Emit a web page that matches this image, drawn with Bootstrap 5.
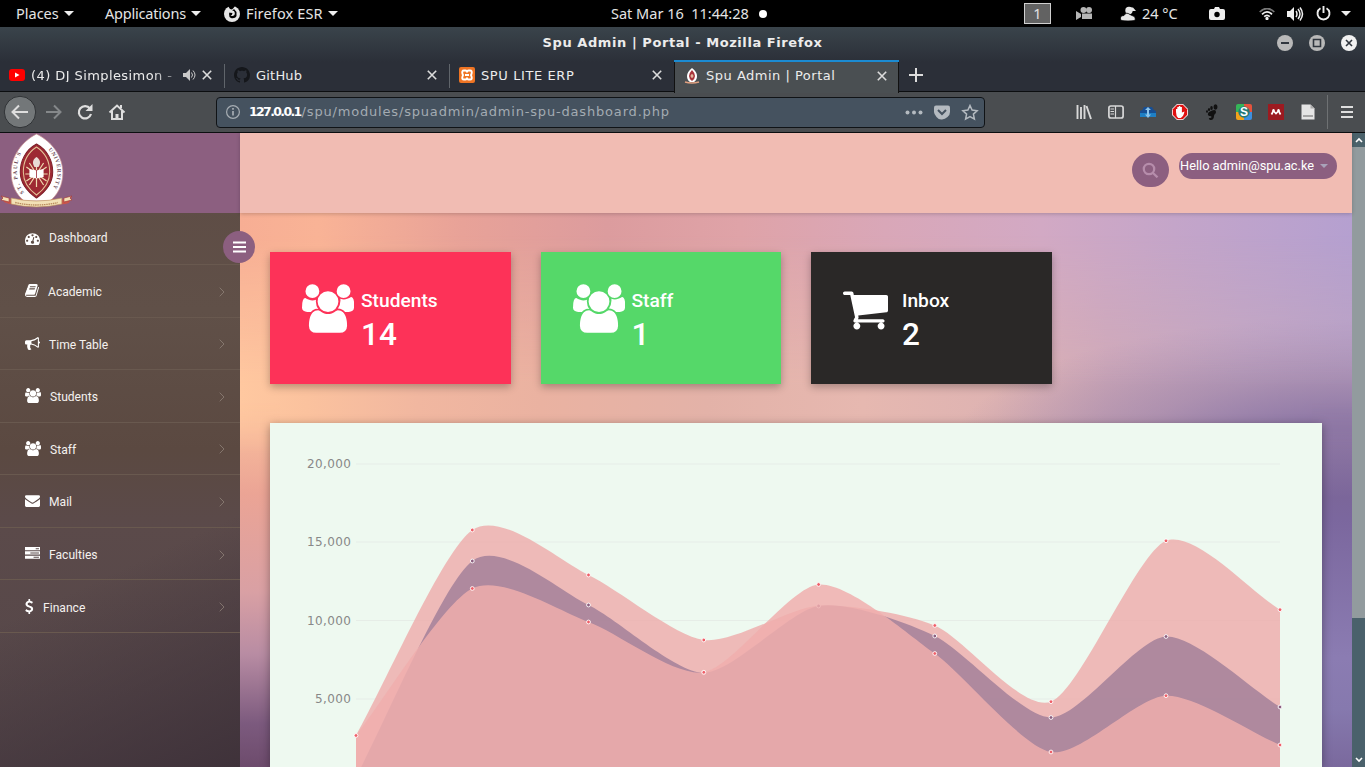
<!DOCTYPE html>
<html lang="en">
<head>
<meta charset="utf-8">
<title>Spu Admin | Portal</title>
<meta name="viewport" content="width=device-width, initial-scale=1">
<link href="https://cdn.jsdelivr.net/npm/bootstrap@5.3.0/dist/css/bootstrap.min.css" rel="stylesheet">
<style>
  :root { --plum: #8c5f80; --steel: #4a616b; }
  html, body { height: 767px; overflow: hidden; }
  body { font-family: Roboto, sans-serif; background: #000; line-height: 1; }
  svg { display: block; flex: none; }

  /* desktop panel */
  .panel { height: 27px; background: #000; color: #e4e4e4; font: 14.5px/27px "Noto Sans", sans-serif; white-space: pre; }
  .panel .lbl { display: inline-block; }
  .tri { display: inline-block; border: 5px solid transparent; border-top-color: #eee; border-bottom: 0; }
  .workspace { width: 27px; height: 21px; background: #626262; border: 1px solid #d0d0d0; line-height: 19px; }

  /* window frame */
  .frame { height: 65px; background: linear-gradient(#3a444b, #2b2f38 55%, #2b2f38); border-bottom: 1px solid #0c0e10; font-family: "DejaVu Sans", sans-serif; color: #ececec; }
  .titlebar { height: 33px; }
  .titlebar .wtitle { font-size: 13px; font-weight: 700; line-height: 31px; letter-spacing: .57px; }
  .tabs { height: 32px; font-size: 13px; letter-spacing: .5px; }
  .btab { width: 225px; height: 32px; padding: 0 12px 2px 10px; }
  .btab:first-child { width: 224px; padding-left: 9px; }
  .btab + .btab { background: linear-gradient(#60656b, #60656b) 0 4px / 1px 24px no-repeat; }
  .btab + .btab.on { background: #4a4f52; border-top: 2px solid #1b8bd2; box-shadow: inset 1px 0 #111, inset -1px 0 #111; height: 33px; padding-bottom: 4px; }
  .fade-title { width: 147px; -webkit-mask-image: linear-gradient(90deg, #000 82%, rgba(0,0,0,.3)); mask-image: linear-gradient(90deg, #000 82%, rgba(0,0,0,.3)); }
  .tools { height: 41px; background: #4a4d50; border-bottom: 1px solid #0c0e10; font-family: "DejaVu Sans", sans-serif; }
  .tools .cell { width: 32px; }
  .urlbar { width: 769px; height: 31px; background: #45525f; border: 1px solid #101316; border-radius: 4px; font-size: 13px; color: #a3abb2; letter-spacing: .82px; }
  .urlbar b { color: #fff; font-size: 12.5px; letter-spacing: -1.65px; margin-right: 1px; }

  /* page */
  .page { height: 634px; }
  .side { width: 240px; background: linear-gradient(155deg, rgba(67,54,61,0) 66%, #3f323a 100%), linear-gradient(#5d4b44, #605048 28%, #5b4941 50%, #5b4a4a 62%, #544649); }
  .brandbox { height: 80px; background: var(--plum); }
  .side .item { height: 52.55px; border-bottom: 1px solid #69594f; padding-left: 25px; padding-right: 15px; color: #f4f1ef; font-size: 12.1px; }
  .side .item:first-child { height: 52px; padding-bottom: 1px; }
  .side .item span { padding-top: 1px; }
  .side .item + .item span { padding-top: 3px; }
  .side .item + .item svg.ms-auto { margin-top: 2px; }
  .toggle { position: absolute; left: 223px; top: 98px; width: 32px; height: 32px; background: var(--plum); z-index: 5; }
  .content { width: 1112px; background: linear-gradient(90deg, #f7ae94, #f9b396 7%, #e8a298 20%, #dc9c9e 33%, #dfa3a8 45%, #d9a7b8 58%, #d2a9c4 72%, #c4a5c9 84%, #b5a0d0); isolation: isolate; }
  .content::before { content: ""; position: absolute; inset: 80px 0 0; z-index: -1;
    background: radial-gradient(ellipse 400px 130px at 100% 235px, #8a74a4 15%, rgba(150,125,165,.55) 55%, rgba(170,140,175,0)),
                linear-gradient(90deg, #ffc8a0, #fbc29e 6%, #f1b7a0 16%, #eab2a1 27%, #e3b2a8 42%, #e6b8b0 56%, #deb3b2 68%, #d0aab8 78%, #c5a8c0 90%, #bda4c2);
    -webkit-mask-image: linear-gradient(rgba(0,0,0,0) 4%, #000 31%); mask-image: linear-gradient(rgba(0,0,0,0) 4%, #000 31%); }
  .content::after { content: ""; position: absolute; inset: 270px 0 0; z-index: -1;
    background: linear-gradient(#fcc39e, #eba495 25%, #d9a0a4 52%, #b88ca3 69%, #7c5a7e 88%, #6d4b6c) 0 0 / 40px 100% no-repeat,
                linear-gradient(#9880a8, #7b669a 26%, #7b679e 32%, #8b7cb2 70%, #8679ae 84%, #7a699d) 100% 0 / 40px 100% no-repeat;
    -webkit-mask-image: linear-gradient(rgba(0,0,0,0), #000 50px); mask-image: linear-gradient(rgba(0,0,0,0), #000 50px); }
  .topstrip { height: 80px; background: #f1bcb3; box-shadow: 0 1px 4px rgba(0,0,0,.2); padding: 20px 15px 0 0; gap: 10px; }
  .find { width: 37px; height: 34px; border-radius: 18px; background: var(--plum); }
  .who { width: 158px; height: 26px; border-radius: 13px; background: var(--plum); color: #fff; font-size: 12.8px; padding-left: 1px; }
  .who .tri { border-width: 4.5px; border-bottom: 0; border-top-color: #a9a3ba; margin-left: 6px; }
  .stats { padding: 39px 30px 0; }
  .stats .row { --bs-gutter-x: 30px; }
  .tile { height: 132px; color: #fff; box-shadow: 0 3px 8px rgba(0,0,0,.28); font-weight: 500; }
  .tile .pic { width: 59px; }
  .tile .name { font-size: 19.2px; line-height: 22px; }
  .tile .num { font-size: 31.5px; line-height: 36px; margin-top: 5px; }
  .chartbox { height: 344px; margin: 39px 30px 0; background: #eef9f0; box-shadow: 0 2px 9px rgba(0,0,0,.35); }
  .vscroll { width: 13px; background: linear-gradient(#4b626b 14px, #929b9e 14px, #929b9e 485px, var(--steel) 485px); }
</style>
</head>
<body>
<svg width="0" height="0" class="position-absolute">
  <symbol id="users" viewBox="64 0 1920 1792"><path d="M657 896q-162 5-265 128h-134q-82 0-138-40.5t-56-118.5q0-353 124-353 6 0 43.5 21t97.5 42.5 119 21.5q67 0 133-23-5 37-5 66 0 159 93 293zm1071 637q0 120-73 189.5t-194 69.5h-874q-121 0-194-69.5t-73-189.5q0-53 3.5-103.5t14-109 26.5-108.5 43-97.5 62-81 85.5-53.5 111.5-20q10 0 43 21.5t73 48 107 48 135 21.5 135-21.5 107-48 73-48 43-21.5q61 0 111.5 20t85.5 53.5 62 81 43 97.5 26.5 108.5 14 109 3.5 103.5zm-1024-1277q0 106-75 181t-181 75-181-75-75-181 75-181 181-75 181 75 75 181zm704 384q0 159-112.5 271.5t-271.5 112.5-271.5-112.5-112.5-271.5 112.5-271.5 271.5-112.5 271.5 112.5 112.5 271.5zm576 225q0 78-56 118.5t-138 40.5h-134q-103-123-265-128 93-134 93-293 0-29-5-66 66 23 133 23 59 0 119-21.5t97.5-42.5 43.5-21q124 0 124 353zm-128-609q0 106-75 181t-181 75-181-75-75-181 75-181 181-75 181 75 75 181z"/></symbol>
  <symbol id="close" viewBox="0 0 10 10"><path d="M.8.8l8.400 8.400M9.200.8L.8 9.200" stroke="#dcdcdc" stroke-width="1.600"/></symbol>
  <symbol id="chev" viewBox="0 0 6 10"><path d="M.7.7L5 5 .7 9.300" fill="none" stroke="#8f8178" stroke-width=".8"/></symbol>
  <symbol id="crest" viewBox="0 0 72 76">
    <path d="M2 64q9 4 16 2 18-3 36 0 8 2 17-2l-3 6q-5 2-10 1-22-3-42 0-6 1-12-2z" fill="#c9554a"/>
    <path d="M36 1C52 9 62 24 62 40c0 13-6 23-13 28H24C16 62 11 52 11 39 11 23 22 8 36 1z" fill="#fff" stroke="#c98e8e" stroke-width=".7"/>
    <path d="M36 11c11 6 16 17 16 28S46 58 36 65C26 58 20 50 20 39S25 17 36 11z" fill="#9d2933" stroke="#7d1f27"/>
    <path d="M36 14c9 6 13 15 13 25s-5 17-13 23c-8-6-13-13-13-23s4-19 13-25z" fill="none" stroke="#e4c79a" stroke-width="1"/>
    <path d="M36 54V34M26 34l20 14M46 34L26 48M29 30l14 22M43 30L29 52M25 41h22" stroke="#efd9ae" stroke-width="1.200"/>
    <path d="M34 34c-3-5-1-8 2-10 3 2 5 5 2 10z" fill="#e9dcd6"/>
    <path d="M29 36l7 1.500 7-1.500v8l-7 1.500-7-1.500z" fill="#fff"/><path d="M36 37v8" stroke="#9d2933" stroke-width=".8"/>
    <path d="M11 65q25 6 50 0v6q-25 6-50 0z" fill="#f3e1b6" stroke="#b98c5c" stroke-width=".6"/>
    <path d="M15 69.500q21 5 42 0" fill="none" stroke="#b98c5c" stroke-width="1.300" stroke-dasharray="1.500 .7"/>
    <path d="M1 63l8 2v4l-8-2 2-2zM71 63l-8 2v4l8-2-2-2z" fill="#f3e1b6" stroke="#a4393b" stroke-width=".7"/>
    <path id="arcL" d="M26 62C14 49 14 29 24 15" fill="none"/><path id="arcR" d="M46 15C60 29 60 48 47 62" fill="none"/>
  </symbol>
</svg>

<!-- desktop panel -->
<div class="panel d-flex align-items-center position-relative">
  <div style="width:105px;padding-left:16px"><span class="lbl" style="width:44px">Places</span><i class="tri ms-1 mb-1 align-middle"></i></div>
  <div style="width:119px"><span class="lbl" style="width:82px;letter-spacing:-.2px">Applications</span><i class="tri ms-1 mb-1 align-middle"></i></div>
  <svg width="16" height="16" viewBox="0 0 16 16"><circle cx="8" cy="8" r="8" fill="#e6e6e6"/><path d="M4 0h7l-1.500 2L8 3.500 6 3z" fill="#000"/><path d="M5.500 5.500L8 5l2-2 2.500 3v4C11.500 12.500 7.500 13 5.500 11q-1-2.500 0-5.500z" fill="#000"/><path d="M4.500 6.500l4 .6-.7 2H6.500q1.500 2 4 0Q11.500 7 10 5l-5-1z" fill="#e6e6e6"/></svg>
  <div style="padding-left:6px"><span class="lbl" style="width:78px;letter-spacing:.15px">Firefox ESR</span><i class="tri ms-1 mb-1 align-middle"></i></div>
  <div class="position-absolute start-50 translate-middle-x d-flex align-items-center" style="margin-left:6.500px"><span class="d-block" style="width:148px">Sat Mar 16  11:44:28</span><svg width="8" height="8"><circle cx="4" cy="4" r="4" fill="#fff"/></svg></div>
  <div class="d-flex align-items-center ms-auto">
    <span class="workspace text-center">1</span>
    <svg class="ms-4" width="18" height="15" viewBox="0 0 18 15" fill="#b5b5b5"><circle cx="8.500" cy="4" r="3"/><circle cx="14" cy="4" r="3"/><path d="M7 7.500h10V13H7zM1 5l5 3v3l-5 3z"/></svg>
    <svg style="margin-left:27px" width="17" height="16" viewBox="0 0 17 16" fill="#e8e8e8"><circle cx="9" cy="4.500" r="3.700"/><path d="M9 1.500h4l3 3.500h-6z"/><path d="M1 14.500q-2-5 3-5 2-4 6-1l2 1q4 1 3 5-7 1-14 0z" stroke="#000" stroke-width=".8"/></svg>
    <span class="lbl" style="width:72px;padding-left:5px">24 °C</span>
    <svg width="16" height="14" viewBox="0 0 16 14"><path d="M2 2h3l1-2h4l1 2h3q2 0 2 2v7q0 2-2 2H2q-2 0-2-2V4q0-2 2-2z" fill="#eee"/><circle cx="8" cy="7.500" r="2.700"/></svg>
    <svg style="margin-left:34px" width="16" height="12" viewBox="0 0 16 12" fill="none" stroke="#eee" stroke-width="1.700"><path d="M.7 4Q8-3 15.300 4" stroke="#777"/><path d="M3 6.300Q8 1.500 13 6.300"/><path d="M5.200 8.600Q8 6 10.800 8.600"/><circle cx="8" cy="10.500" r=".8"/></svg>
    <svg style="margin-left:12px" width="17" height="14" viewBox="0 0 17 14" fill="none" stroke="#eee" stroke-width="1.500"><path d="M0 4h3l4-4v14l-4-4H0z" fill="#eee" stroke="none"/><path d="M9 4q2 3 0 6M11 2q4 5 0 10M13 .5q5 6.500 0 13"/></svg>
    <svg style="margin-left:12px" width="15" height="15" viewBox="0 0 15 15" fill="none" stroke="#eee" stroke-width="1.900"><path d="M4.500 2.300a6 6 0 1 0 6 0M7.500 0v7"/></svg>
    <i class="tri" style="margin:0 14px 0 10px"></i>
  </div>
</div>

<!-- window frame with tabs -->
<div class="frame position-relative">
  <div class="titlebar position-relative text-center">
    <span class="wtitle">Spu Admin | Portal - Mozilla Firefox</span>
    <svg class="position-absolute top-0 end-0" width="90" height="33" viewBox="1275 27 90 33"><circle cx="1285" cy="43" r="8" fill="#b9b9b9"/><circle cx="1317" cy="43" r="8" fill="#b9b9b9"/><circle cx="1349" cy="43" r="8" fill="#f2f2f2"/><g stroke="#30363e" fill="none"><path d="M1281 43h8" stroke-width="2"/><path d="M1313.500 39.500h7v7h-7z" stroke-width="1.600"/><path d="M1346 40l6 6m0-6l-6 6" stroke-width="1.600"/></g></svg>
  </div>
  <div class="tabs d-flex">
    <div class="btab d-flex align-items-center">
      <svg width="16" height="12" viewBox="0 0 16 12"><rect width="16" height="12" rx="3" fill="#f00"/><path d="M6 3.500v5L10.500 6z" fill="#fff"/></svg>
      <span class="text-nowrap fade-title" style="margin-left:6px;letter-spacing:.42px">(4) DJ Simplesimon -</span>
      <svg style="margin-left:5px" width="14" height="12" viewBox="0 0 14 12" fill="none" stroke="#c9c9c9"><path d="M0 4h3l4-4v12L3 8H0z" fill="#c9c9c9" stroke="none"/><path d="M8.500 3.500q2 2.500 0 5M10 1.500q4 4.500 0 9"/></svg>
      <svg style="margin-left:5px" width="10" height="10"><use href="#close"/></svg>
    </div>
    <div class="btab d-flex align-items-center">
      <svg width="16" height="16" viewBox="0 0 16 16"><path fill="#15171b" d="M8 0C3.580 0 0 3.580 0 8c0 3.540 2.290 6.530 5.470 7.590.4.070.55-.17.55-.38 0-.19-.01-.82-.01-1.490-2.010.37-2.530-.49-2.690-.94-.09-.23-.48-.94-.82-1.130-.28-.15-.68-.52-.01-.53.63-.01 1.080.58 1.230.82.72 1.210 1.870.87 2.330.66.07-.52.28-.87.51-1.070-1.780-.2-3.640-.89-3.640-3.950 0-.87.31-1.590.82-2.150-.08-.2-.36-1.020.08-2.120 0 0 .67-.21 2.200.82.64-.18 1.320-.27 2-.27s1.360.09 2 .27c1.530-1.040 2.200-.82 2.200-.82.44 1.100.16 1.920.08 2.120.51.56.82 1.270.82 2.150 0 3.070-1.870 3.750-3.650 3.950.29.25.54.73.54 1.480 0 1.070-.01 1.930-.01 2.200 0 .21.15.46.55.38A8.010 8.010 0 0 0 16 8c0-4.420-3.580-8-8-8z"/></svg>
      <span style="margin-left:6px;letter-spacing:.2px">GitHub</span><svg class="ms-auto" width="10" height="10"><use href="#close"/></svg>
    </div>
    <div class="btab d-flex align-items-center">
      <svg width="16" height="16" viewBox="0 0 16 16"><rect width="16" height="16" rx="2" fill="#ef7423"/><path d="M5 3.500h1.500q1.500 0 1.500 2h0q0-2 1.500-2H11q2.500 0 1.500 3.500L12 8l.5 1.500q1 3-1.500 3H9.500q-1.500 0-1.500-2 0 2-1.500 2H5q-2.500 0-1.500-3L4 8l-.5-1Q2.500 3.500 5 3.500zM6 8h4" fill="none" stroke="#fff" stroke-width="1.900"/></svg>
      <span style="margin-left:6px;letter-spacing:.6px">SPU LITE ERP</span><svg class="ms-auto" width="10" height="10"><use href="#close"/></svg>
    </div>
    <div class="btab on d-flex align-items-center">
      <svg width="16" height="16" viewBox="0 0 16 16"><path d="M8 0q5 4 5 8 0 4-3 6H6Q3 12 3 8q0-4 5-8z" fill="#fff"/><path d="M8 2q3 3 3 6t-3 5q-3-2-3-5t3-6z" fill="#a9343b"/><path d="M8 6v4M6.500 8h3" stroke="#f5e2c0"/><path d="M1 14q7 2 14 0" stroke="#e0a080" fill="none" stroke-width="1.500"/></svg>
      <span style="margin-left:6px">Spu Admin | Portal</span><svg class="ms-auto" width="10" height="10"><use href="#close"/></svg>
    </div>
    <svg style="margin:8px 0 0 10px" width="14" height="14"><path d="M7 0v14M0 7h14" stroke="#ddd" stroke-width="2"/></svg>
  </div>
</div>

<!-- navigation toolbar -->
<div class="tools d-flex align-items-center">
  <svg width="216" height="40" viewBox="0 92 216 40" fill="none" stroke="#dedede" stroke-width="2"><circle cx="20" cy="112" r="15.700" fill="#737779" stroke="#303336" stroke-width="1"/><path d="M28 112H13m6-6.500L12.500 112l6.500 6.500"/><path d="M46 112h14m-6-6.500l6.500 6.500-6.500 6.500" stroke="#85888a"/><path d="M90 108.500A6.200 6.200 0 1 0 91 114" stroke-width="2.200"/><path d="M92.500 104v7h-7z" fill="#dedede" stroke="none"/><path d="M109.500 112.500l7.500-7 7.500 7M112 111v8h10v-8"/><path d="M117 119v-5" stroke-width="3"/><path d="M121 105v3"/></svg>
  <div class="urlbar d-flex align-items-center">
    <svg style="margin-left:9px" width="14" height="14" fill="none" stroke="#a6adb3"><circle cx="7" cy="7" r="6.400" stroke-width="1.200"/><path d="M7 6v4.500M7 3v1.800" stroke-width="1.700"/></svg>
    <span class="text-nowrap" style="margin-left:9px"><b>127.0.0.1</b>/spu/modules/spuadmin/admin-spu-dashboard.php</span>
    <svg class="ms-auto" style="margin-right:5px" width="74" height="17" viewBox="0 0 74 17" fill="#b4bac0"><circle cx="2.500" cy="8.500" r="2"/><circle cx="9" cy="8.500" r="2"/><circle cx="15.500" cy="8.500" r="2"/><path d="M31 1.500h12q2 0 2 2V8q0 3-2.500 5T37 15.500 31.500 13 29 8V3.500q0-2 2-2z"/><path d="M33 6l4 4 4-4" fill="none" stroke="#45525f" stroke-width="2"/><path d="M65 1.500l2.100 4.600 5 .6-3.700 3.400 1 5-4.400-2.500-4.400 2.500 1-5-3.700-3.400 5-.6z" fill="none" stroke="#b4bac0" stroke-width="1.500"/></svg>
  </div>
  <div class="d-flex align-items-center" style="margin-left:83px">
    <div class="cell"><svg class="mx-auto" width="16" height="16" fill="none" stroke="#d8d8d8" stroke-width="1.900"><path d="M1.500 1v14M5 3v12M8.500 1v14M10.500 2l4.500 13"/></svg></div>
    <div class="cell"><svg class="mx-auto" width="16" height="16" fill="none" stroke="#d8d8d8" stroke-width="1.700"><rect x=".9" y="2" width="14.200" height="12" rx="2"/><path d="M7.500 2v12M2.500 5H6M2.500 7.500H6M2.500 10H6" stroke-width="1.200"/></svg></div>
    <div class="cell"><svg class="mx-auto" width="16" height="16"><path d="M0 7q3-1 4-4h8q1 3 4 4v5H0z" fill="#174e93"/><path d="M0 9h16v4H0z" fill="#1e7fc4"/><path d="M8 4.500v7" stroke="#8cc5ed" stroke-width="2"/><path d="M5 6l3-3 3 3zM5 10.500h6L8 14z" fill="#8cc5ed"/></svg></div>
    <div class="cell"><svg class="mx-auto" width="16" height="16"><path d="M5 0h6l5 5v6l-5 5H5l-5-5V5z" fill="#fff"/><path d="M5.200.8h5.600l4.400 4.400v5.600l-4.400 4.400H5.200L.8 10.800V5.200z" fill="#df1111"/><path d="M4 8V5h1.300V3h1.500V2h1.500v1h1.600v5.500l2.600-1q-1 5-3.800 6.500H6.200Q4 12 4 8z" fill="#fff"/></svg></div>
    <div class="cell"><svg class="mx-auto" width="16" height="17" fill="#111"><path d="M5 8q7-4 7 0c0 2-2 2-2 4s-1 4-3 4-3-2-1-2 2-2 0-2-3-2-1-4z"/><ellipse cx="11.500" cy="3" rx="2" ry="2.700"/><ellipse cx="7.500" cy="4" rx="1.300" ry="1.900"/><ellipse cx="5" cy="5.500" rx="1.100" ry="1.500"/><ellipse cx="3" cy="7.500" rx="1" ry="1.200"/></svg></div>
    <div class="cell"><svg class="mx-auto" width="16" height="16"><path d="M2 0h6v8H0V2q0-2 2-2z" fill="#35b558"/><path d="M8 0h6q2 0 2 2v6H8z" fill="#e5533d"/><path d="M0 8h8v8H2q-2 0-2-2z" fill="#f3a31b"/><path d="M8 8h8v6q0 2-2 2H8z" fill="#3c8fe0"/><circle cx="8" cy="8" r="5.700" fill="#257a77"/><text x="8" y="12.300" text-anchor="middle" font-family="Liberation Sans" font-weight="700" font-size="12" letter-spacing="0" fill="#fff">S</text></svg></div>
    <div class="cell"><svg class="mx-auto" width="16" height="16"><rect width="16" height="16" fill="#9c1a20"/><path d="M3.500 10.500l1.500-3h1l2 2 2-2h1l1.500 3" fill="none" stroke="#fff" stroke-width="1.700"/><circle cx="5.500" cy="6.300" r="1.200" fill="#fff"/><circle cx="10.500" cy="6.300" r="1.200" fill="#fff"/></svg></div>
    <div class="cell"><svg class="mx-auto" width="14" height="16"><path d="M.5.500h9l4 4v11H.5z" fill="#e5e5e5"/><path d="M9.500.5v4h4z" fill="#aaa"/><path d="M2 11h10v2H2z" fill="#a5a5a5"/></svg></div>
  </div>
  <svg style="margin-left:3px" width="30" height="34" viewBox="0 0 30 34"><path d="M.5 0v34" stroke="#6e7173"/><path d="M14 12h12M14 17h12M14 22h12" stroke="#dedede" stroke-width="2"/></svg>
</div>

<!-- web page -->
<div class="page d-flex position-relative">
  <aside class="side">
    <div class="brandbox"><svg width="73" height="76" viewBox="0 0 72 76" preserveAspectRatio="none"><use href="#crest"/><g font-family="Liberation Serif" font-weight="700" font-size="5.500" fill="#6c4a55"><text letter-spacing="1.500"><textPath href="#arcL" startOffset="3">ST. PAUL'S</textPath></text><text letter-spacing=".8"><textPath href="#arcR" startOffset="2">UNIVERSITY</textPath></text></g></svg></div>
    <nav>
      <div class="item d-flex align-items-center"><svg width="15" height="15" viewBox="0 0 1792 1792" fill="#fff"><path d="M384 1152q0-53-37.500-90.500t-90.500-37.500-90.500 37.500-37.500 90.500 37.500 90.500 90.500 37.500 90.500-37.500 37.500-90.500zm192-448q0-53-37.500-90.500t-90.500-37.500-90.500 37.500-37.500 90.500 37.500 90.500 90.500 37.500 90.500-37.500 37.500-90.500zm428 481l101-382q6-26-7.500-48.500t-38.500-29.500-48 6.500-30 39.500l-101 382q-60 5-107 43.500t-63 98.500q-20 77 20 146t117 89 146-20 89-117q16-60-6-117t-72-91zm660-33q0-53-37.500-90.500t-90.500-37.500-90.500 37.500-37.500 90.500 37.500 90.500 90.500 37.500 90.500-37.500 37.500-90.500zm-640-640q0-53-37.500-90.500t-90.500-37.500-90.500 37.500-37.500 90.500 37.500 90.500 90.500 37.500 90.500-37.500 37.500-90.500zm448 192q0-53-37.500-90.500t-90.500-37.500-90.500 37.500-37.500 90.500 37.500 90.500 90.500 37.500 90.500-37.500 37.500-90.500zm320 448q0 261-141 483-19 29-54 29h-1402q-35 0-54-29-141-221-141-483 0-182 71-348t191-286 286-191 348-71 348 71 286 191 191 286 71 348z"/></svg><span style="margin-left:9px">Dashboard</span></div>
      <div class="item d-flex align-items-center"><svg width="14" height="15" viewBox="60 0 1672 1792" fill="#fff"><path d="M1703 478q40 57 18 129l-275 906q-19 64-76.500 107.500t-122.500 43.500h-923q-77 0-148.500-53.500t-99.500-131.500q-24-67-2-127 0-4 3-27t4-37q1-8-3-21.500t-3-19.500q2-11 8-21t16.500-23.500 16.500-23.500q23-38 45-91.500t30-91.500q3-10 .5-30t-.5-28q3-11 17-28t17-23q21-36 42-92t25-90q1-9-2.500-32t.5-28q4-13 22-30.500t22-22.500q19-26 42.500-84.500t27.500-96.500q1-8-3-25.500t-2-26.500q2-8 9-18t18-23 17-21q8-12 16.500-30.500t15-35 16-36 19.500-32 26.500-23.500 36-11.500 47.500 5.500l-1 3q38-9 51-9h761q74 0 114 56t18 130l-274 906q-36 119-71.500 153.500t-128.500 34.500h-869q-27 0-38 15-11 16-1 43 24 70 144 70h923q29 0 56-15.500t35-41.500l300-987q7-22 5-57 38 15 59 43zm-1064 2q-4 13 2 22.500t20 9.500h608q13 0 25.500-9.500t16.500-22.500l21-64q4-13-2-22.500t-20-9.500h-608q-13 0-25.500 9.500t-16.500 22.500zm-83 256q-4 13 2 22.500t20 9.500h608q13 0 25.500-9.500t16.500-22.500l21-64q4-13-2-22.500t-20-9.500h-608q-13 0-25.500 9.500t-16.500 22.500z"/></svg><span style="margin-left:9px">Academic</span><svg class="ms-auto" width="6" height="10"><use href="#chev"/></svg></div>
      <div class="item d-flex align-items-center"><svg width="15" height="15" viewBox="0 0 1792 1792" fill="#fff"><path d="M1664 640q53 0 90.500 37.500t37.500 90.500-37.500 90.500-90.500 37.500v384q0 52-38 90t-90 38q-417-347-812-380-58 19-91 66t-31 100.500 40 92.500q-20 33-23 65.500t6 58 33.500 55 48 50 61.500 50.500q-29 58-111.500 83t-168.500 11.500-132-55.500q-7-23-29.500-87.500t-32-94.500-23-89-15-101 3.500-98.500 22-110.500h-122q-66 0-113-47t-47-113v-192q0-66 47-113t113-47h480q435 0 896-384 52 0 90 38t38 90v384zm-128 604v-954q-394 302-768 343v270q377 42 768 341z"/></svg><span style="margin-left:9px">Time Table</span><svg class="ms-auto" width="6" height="10"><use href="#chev"/></svg></div>
      <div class="item d-flex align-items-center"><svg width="16" height="15" fill="#fff"><use href="#users"/></svg><span style="margin-left:9px">Students</span><svg class="ms-auto" width="6" height="10"><use href="#chev"/></svg></div>
      <div class="item d-flex align-items-center"><svg width="16" height="15" fill="#fff"><use href="#users"/></svg><span style="margin-left:9px">Staff</span><svg class="ms-auto" width="6" height="10"><use href="#chev"/></svg></div>
      <div class="item d-flex align-items-center"><svg width="15" height="15" viewBox="0 0 1792 1792" fill="#fff"><path d="M1792 710v794q0 66-47 113t-113 47h-1472q-66 0-113-47t-47-113v-794q44 49 101 87 362 246 497 345 57 42 92.500 65.500t94.500 48 110 24.500h2q51 0 110-24.500t94.500-48 92.500-65.500q170-123 498-345 57-39 100-87zm0-294q0 79-49 151t-122 123q-376 261-468 325-10 7-42.500 31t-54 38.500-52 32.500-57.500 27-50 9h-2q-23 0-50-9t-57.500-27-52-32.500-54-38.500-42.500-31q-91-64-262-182.500t-205-142.500q-62-42-117-115.500t-55-136.500q0-78 41.500-130t118.500-52h1472q65 0 112.500 47t47.500 113z"/></svg><span style="margin-left:9px">Mail</span><svg class="ms-auto" width="6" height="10"><use href="#chev"/></svg></div>
      <div class="item d-flex align-items-center"><svg width="15" height="15" viewBox="0 0 1792 1792" fill="#fff" fill-rule="evenodd"><path d="M1024 1408h640v-128h-640zM640 896h1024V768H640zM1280 384h384V256h-384zM0 1152h1792v384H0zM0 640h1792v384H0zM0 128h1792v384H0z"/></svg><span style="margin-left:9px">Faculties</span><svg class="ms-auto" width="6" height="10"><use href="#chev"/></svg></div>
      <div class="item d-flex align-items-center"><svg width="8.500" height="15" viewBox="430 0 940 1792" fill="#fff"><path d="M1362 1185q0 153-99.500 263.500t-258.500 136.500v175q0 14-9 23t-23 9h-135q-13 0-22.500-9.500t-9.500-22.500v-175q-66-9-127.500-31t-101.500-44.500-74-48-46.500-37.500-17.500-18q-17-21-2-41l103-135q7-10 23-12 15-2 24 9l2 2q113 99 243 125 37 8 74 8 81 0 142.500-43t61.500-122q0-28-15-53t-33.500-42-58.500-37.500-66-32-80-32.500q-39-16-61.500-25t-61.500-26.500-62.500-31-56.500-35.500-53.500-42.500-43.500-49-35.500-58-21-66.500-8.500-78q0-138 98-242t255-134v-180q0-13 9.500-22.500t22.500-9.500h135q14 0 23 9t9 23v176q57 6 110.500 23t87 33.500 63.500 37.500 39 29 15 14q17 18 5 38l-81 146q-8 15-23 16-14 3-27-7-3-3-14.500-12t-39-26.500-58.500-32-74.500-26-85.500-11.500q-95 0-155 43t-60 111q0 26 8.500 48t29.500 41.500 39.500 33 56 31 60.500 27 70 27.500q53 20 81 31.500t76 35 75.500 42.500 62 50 53 63.500 31.500 76.500 13 94z"/></svg><span style="margin-left:9.500px">Finance</span><svg class="ms-auto" width="6" height="10"><use href="#chev"/></svg></div>
    </nav>
  </aside>
  <div class="toggle rounded-circle d-flex align-items-center justify-content-center"><svg width="13" height="12"><path d="M0 1.500h13M0 6h13M0 10.500h13" stroke="#fff" stroke-width="2.200"/></svg></div>

  <main class="content position-relative">
    <header class="topstrip d-flex justify-content-end align-items-start">
      <div class="find d-flex align-items-center justify-content-center"><svg width="17" height="16" fill="none" stroke="#b68dab" stroke-width="2.300"><circle cx="7" cy="7" r="5.200"/><path d="M11 11l4.500 4.300"/></svg></div>
      <div class="who d-flex align-items-center text-nowrap"><span>Hello admin@spu.ac.ke</span><i class="tri"></i></div>
    </header>
    <div class="stats"><div class="row">
      <div class="col-3"><div class="tile d-flex" style="background:#fd3258"><div class="pic" style="margin:32px 0 0 32px"><svg width="52" height="49" fill="#fff"><use href="#users"/></svg></div><div style="margin-top:38px"><div class="name">Students</div><div class="num">14</div></div></div></div>
      <div class="col-3"><div class="tile d-flex" style="background:#55d869"><div class="pic" style="margin:32px 0 0 32px"><svg width="52" height="49" fill="#fff"><use href="#users"/></svg></div><div style="margin-top:38px"><div class="name">Staff</div><div class="num">1</div></div></div></div>
      <div class="col-3"><div class="tile d-flex" style="background:#2a2827"><div class="pic" style="margin:39px 0 0 32px"><svg width="45" height="39" viewBox="64 256 1664 1408" fill="#fff"><path d="M704 1536q0 52-38 90t-90 38-90-38-38-90 38-90 90-38 90 38 38 90zm896 0q0 52-38 90t-90 38-90-38-38-90 38-90 90-38 90 38 38 90zm128-1088v512q0 24-16.500 42.500t-40.500 21.500l-1044 122q13 60 13 70 0 16-24 64h920q26 0 45 19t19 45-19 45-45 19h-1024q-26 0-45-19t-19-45q0-11 8-31.500t16-36 21.500-40 15.500-29.500l-177-823h-204q-26 0-45-19t-19-45 19-45 45-19h256q16 0 28.500 6.500t19.500 15.500 13 24.500 8 26 5.500 29.500 4.500 26h1201q26 0 45 19t19 45z"/></svg></div><div style="margin-top:38px"><div class="name">Inbox</div><div class="num">2</div></div></div></div>
    </div></div>
    <div class="chartbox"><svg id="chart" width="1052" height="344" viewBox="270 423 1052 344" font-family="DejaVu Sans" font-size="12" fill="#888">
      <path d="M356 464h924M356 542h924M356 620.500h924M356 699h924" stroke="#e6ede7" stroke-width="1.200"/>
      <g text-anchor="end"><text x="351" y="468" textLength="44">20,000</text><text x="351" y="546" textLength="44">15,000</text><text x="351" y="625" textLength="44">10,000</text><text x="351" y="703" textLength="36">5,000</text></g>
    </svg></div>
  </main>
  <div class="vscroll d-flex flex-column justify-content-between align-items-center py-1"><svg width="8" height="6"><path d="M1 5l3-3 3 3" fill="none" stroke="#fff" stroke-width="1.600"/></svg><svg width="8" height="6"><path d="M1 1l3 3 3-3" fill="none" stroke="#fff" stroke-width="1.600"/></svg></div>
</div>

<script src="https://cdn.jsdelivr.net/npm/bootstrap@5.3.0/dist/js/bootstrap.bundle.min.js"></script>
<script>
  // Smoothed area chart: one filled curve per series, each followed by its own markers.
  const xs = [356, 472.3, 588.5, 703.8, 818.6, 934.8, 1051, 1166, 1280];
  const base = 777;
  const series = [
    { ys: [735.5, 530, 575, 640, 605.7, 625.5, 701.7, 540.8, 609.7], fill: '#edaead', dot: '#ef5f68' },
    { ys: [777, 561, 605, 672.8, 606, 636, 717.5, 636.5, 707], fill: '#a28098', dot: '#8c5f80' },
    { ys: [735.5, 588.5, 622, 672.3, 584.5, 653.5, 752, 695.7, 745], fill: '#efaead', dot: '#ef5f68' }
  ];
  const svg = document.getElementById('chart');
  const add = (tag, attrs) => {
    const el = document.createElementNS('http://www.w3.org/2000/svg', tag);
    for (const k in attrs) el.setAttribute(k, attrs[k]);
    svg.appendChild(el);
  };
  for (const s of series) {
    const n = xs.length - 1;
    const g = xs.map((x, i) => {
      const a = Math.max(0, i - 1), b = Math.min(n, i + 1);
      return (s.ys[b] - s.ys[a]) / (xs[b] - xs[a]);
    });
    let d = `M${xs[0]} ${s.ys[0]}`;
    for (let i = 1; i <= n; i++) {
      const k = (xs[i] - xs[i - 1]) / 4;
      d += `C${xs[i - 1] + k} ${Math.min(base, s.ys[i - 1] + k * g[i - 1])} ${xs[i] - k} ${Math.min(base, s.ys[i] - k * g[i])} ${xs[i]} ${s.ys[i]}`;
    }
    add('path', { d: `${d}V${base}H${xs[0]}Z`, fill: s.fill, 'fill-opacity': .84 });
    xs.forEach((x, i) => add('circle', { cx: x, cy: s.ys[i], r: 1.9, fill: s.dot, stroke: '#fff', 'stroke-width': .9 }));
  }
</script>
</body>
</html>
